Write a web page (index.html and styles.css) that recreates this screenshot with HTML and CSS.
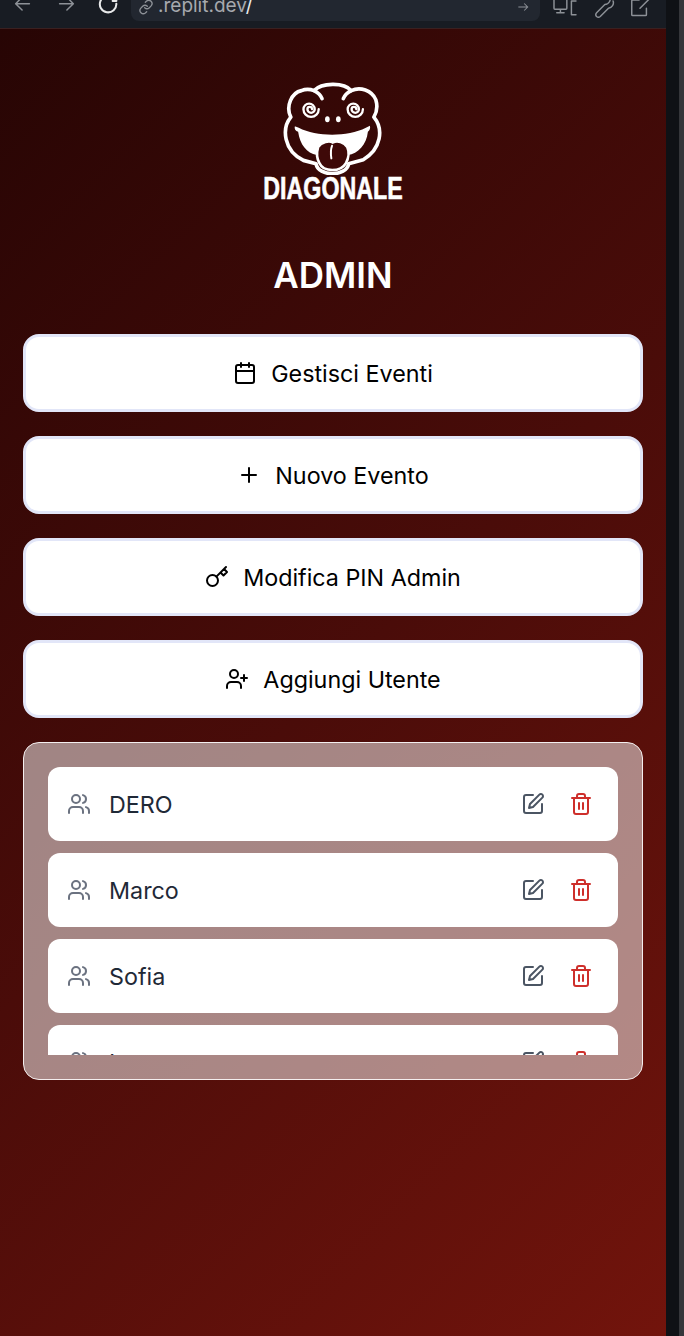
FILE: index.html
```html
<!DOCTYPE html>
<html lang="it">
<head>
<meta charset="utf-8">
<title>Diagonale Admin</title>
<link rel="stylesheet" href="styles.css">
</head>
<body>
<div class="window">
  <header class="topbar">
    <div class="nav">
      <svg class="tb-icon" viewBox="0 0 24 24"><path d="M19 4H5M11 -3 4 4l7 7"/></svg>
      <svg class="tb-icon" viewBox="0 0 24 24"><path d="M5 4h14M13 -3l7 7-7 7"/></svg>
      <svg class="tb-icon reload" viewBox="0 0 24 24"><path d="M20 4a9 9 0 1 1-4-7M20 -3v4h-4"/></svg>
    </div>
    <div class="address">
      <svg class="link-icon" viewBox="0 0 24 24"><path d="M10 13a5 5 0 0 0 7 0l3-3a5 5 0 0 0-7-7l-2 2M14 11a5 5 0 0 0-7 0l-3 3a5 5 0 0 0 7 7l2-2"/></svg>
      <span class="url">.replit.dev<span class="url-path">/</span></span>
      <svg class="go-icon" viewBox="0 0 24 24"><path d="M4 12h16M14 6l6 6-6 6"/></svg>
    </div>
    <div class="tools">
      <svg class="tb-icon tool-wide" viewBox="0 0 26 24"><path d="M1 -2v11a1 1 0 0 0 1 1h12a1 1 0 0 0 1-1V-2M8 10v4M4 14h8M25 1h-5v15h5"/></svg>
      <svg class="tb-icon" viewBox="0 0 24 24"><path d="M19 -4a6 6 0 0 1-5 9L5 14a3 3 0 0 0 0 4 3 3 0 0 0 4 0l9-9a6 6 0 0 0 5-8"/></svg>
      <svg class="tb-icon" viewBox="0 0 24 24"><path d="M11 0H4a1 1 0 0 0-1 1v15a1 1 0 0 0 1 1h14a1 1 0 0 0 1-1V9M12 9 22 -1"/></svg>
    </div>
  </header>

  <main class="page">
    <div class="logo">
      <svg class="logo-mark" viewBox="0 0 510 310">
        <g class="lm-line">
          <path d="M122 136C106 104 124 62 154 56 168 50 182 52 192 56 214 32 282 30 304 56 330 44 366 54 378 84 384 104 380 122 372 136 402 172 394 232 340 264L296 276C290 316 204 316 198 276L160 266C100 236 94 170 122 136Z"/>
          <path d="M192 56C204 62 212 70 216 80M304 56C292 62 284 70 280 80"/>
          <path class="lm-thin" d="M186 112a7 7 0 0 0-14 0a11 11 0 0 0 22 0a17 17 0 0 0-34 0a23 23 0 0 0 46 0"/>
          <path class="lm-thin" d="M319 112a7 7 0 0 0-14 0a11 11 0 0 0 22 0a17 17 0 0 0-34 0a23 23 0 0 0 46 0"/>
        </g>
        <ellipse class="lm-fill" cx="232" cy="142" rx="7" ry="9"/>
        <ellipse class="lm-fill" cx="265" cy="142" rx="7" ry="9"/>
        <path class="lm-fill" d="M136 164l10 4C200 196 292 196 348 168l12-6c2 6 0 14-6 18-4 40-30 66-60 70h-94c-30-6-50-30-56-70-8-2-12-10-10-16Z"/>
        <path class="lm-tongue" d="M204 226c10-16 34-20 44-14 14-6 34-2 44 14 6 14 4 34-4 48-16 28-68 28-80 0-8-14-8-34-4-48Z"/>
        <path class="lm-seam" d="M246 222c-4 10-4 24-2 38"/>
      </svg>
      <div class="logo-name">DIAGONALE</div>
    </div>

    <h1 class="title">ADMIN</h1>

    <div class="actions">
      <button class="action" type="button">
        <svg class="icon" viewBox="0 0 24 24"><path d="M8 2v4M16 2v4"/><rect x="3" y="4" width="18" height="18" rx="2"/><path d="M3 10h18"/></svg>
        <span class="action-label">Gestisci Eventi</span>
      </button>
      <button class="action" type="button">
        <svg class="icon" viewBox="0 0 24 24"><path d="M5 12h14M12 5v14"/></svg>
        <span class="action-label">Nuovo Evento</span>
      </button>
      <button class="action" type="button">
        <svg class="icon" viewBox="0 0 24 24"><circle cx="7.5" cy="15.5" r="5.5"/><path d="m21 2-9.6 9.6M15.5 7.5l3 3L22 7l-3-3"/></svg>
        <span class="action-label">Modifica PIN Admin</span>
      </button>
      <button class="action" type="button">
        <svg class="icon" viewBox="0 0 24 24"><path d="M16 21v-2a4 4 0 0 0-4-4H6a4 4 0 0 0-4 4v2"/><circle cx="9" cy="7" r="4"/><path d="M19 8v6M22 11h-6"/></svg>
        <span class="action-label">Aggiungi Utente</span>
      </button>
    </div>

    <section class="panel">
      <div class="user-list">
        <div class="user">
          <svg class="icon user-icon" viewBox="0 0 24 24"><path d="M16 21v-2a4 4 0 0 0-4-4H6a4 4 0 0 0-4 4v2"/><circle cx="9" cy="7" r="4"/><path d="M22 21v-2a4 4 0 0 0-3-3.87M16 3.13a4 4 0 0 1 0 7.75"/></svg>
          <span class="user-name">DERO</span>
          <svg class="icon edit-icon" viewBox="0 0 24 24"><path d="M12 3H5a2 2 0 0 0-2 2v14a2 2 0 0 0 2 2h14a2 2 0 0 0 2-2v-7"/><path d="M18.375 2.625a2.121 2.121 0 1 1 3 3L12 15l-4 1 1-4Z"/></svg>
          <svg class="icon trash-icon" viewBox="0 0 24 24"><path d="M3 6h18M19 6v14c0 1-1 2-2 2H7c-1 0-2-1-2-2V6M8 6V4c0-1 1-2 2-2h4c1 0 2 1 2 2v2M10 11v6M14 11v6"/></svg>
        </div>
        <div class="user">
          <svg class="icon user-icon" viewBox="0 0 24 24"><path d="M16 21v-2a4 4 0 0 0-4-4H6a4 4 0 0 0-4 4v2"/><circle cx="9" cy="7" r="4"/><path d="M22 21v-2a4 4 0 0 0-3-3.87M16 3.13a4 4 0 0 1 0 7.75"/></svg>
          <span class="user-name">Marco</span>
          <svg class="icon edit-icon" viewBox="0 0 24 24"><path d="M12 3H5a2 2 0 0 0-2 2v14a2 2 0 0 0 2 2h14a2 2 0 0 0 2-2v-7"/><path d="M18.375 2.625a2.121 2.121 0 1 1 3 3L12 15l-4 1 1-4Z"/></svg>
          <svg class="icon trash-icon" viewBox="0 0 24 24"><path d="M3 6h18M19 6v14c0 1-1 2-2 2H7c-1 0-2-1-2-2V6M8 6V4c0-1 1-2 2-2h4c1 0 2 1 2 2v2M10 11v6M14 11v6"/></svg>
        </div>
        <div class="user">
          <svg class="icon user-icon" viewBox="0 0 24 24"><path d="M16 21v-2a4 4 0 0 0-4-4H6a4 4 0 0 0-4 4v2"/><circle cx="9" cy="7" r="4"/><path d="M22 21v-2a4 4 0 0 0-3-3.87M16 3.13a4 4 0 0 1 0 7.75"/></svg>
          <span class="user-name">Sofia</span>
          <svg class="icon edit-icon" viewBox="0 0 24 24"><path d="M12 3H5a2 2 0 0 0-2 2v14a2 2 0 0 0 2 2h14a2 2 0 0 0 2-2v-7"/><path d="M18.375 2.625a2.121 2.121 0 1 1 3 3L12 15l-4 1 1-4Z"/></svg>
          <svg class="icon trash-icon" viewBox="0 0 24 24"><path d="M3 6h18M19 6v14c0 1-1 2-2 2H7c-1 0-2-1-2-2V6M8 6V4c0-1 1-2 2-2h4c1 0 2 1 2 2v2M10 11v6M14 11v6"/></svg>
        </div>
        <div class="user">
          <svg class="icon user-icon" viewBox="0 0 24 24"><path d="M16 21v-2a4 4 0 0 0-4-4H6a4 4 0 0 0-4 4v2"/><circle cx="9" cy="7" r="4"/><path d="M22 21v-2a4 4 0 0 0-3-3.87M16 3.13a4 4 0 0 1 0 7.75"/></svg>
          <span class="user-name">Luca</span>
          <svg class="icon edit-icon" viewBox="0 0 24 24"><path d="M12 3H5a2 2 0 0 0-2 2v14a2 2 0 0 0 2 2h14a2 2 0 0 0 2-2v-7"/><path d="M18.375 2.625a2.121 2.121 0 1 1 3 3L12 15l-4 1 1-4Z"/></svg>
          <svg class="icon trash-icon" viewBox="0 0 24 24"><path d="M3 6h18M19 6v14c0 1-1 2-2 2H7c-1 0-2-1-2-2V6M8 6V4c0-1 1-2 2-2h4c1 0 2 1 2 2v2M10 11v6M14 11v6"/></svg>
        </div>
      </div>
    </section>
  </main>
</div>
<div class="edge"></div>
</body>
</html>
```
FILE: styles.css
```css
* { box-sizing: border-box; }

html, body { height: 100%; }

body {
  margin: 0;
  display: flex;
  height: 1336px;
  overflow: hidden;
  background: #0f1115;
  font-family: Inter, "Liberation Sans", sans-serif;
}

.window {
  width: 666px;
  height: 1336px;
  display: flex;
  flex-direction: column;
  flex: none;
}

.edge {
  width: 18px;
  height: 1336px;
  flex: none;
  background: #0f1115;
  border-right: 5px solid #35363a;
}

/* Browser toolbar */
.topbar {
  height: 29px;
  flex: none;
  display: flex;
  align-items: flex-start;
  background: #181c23;
  overflow: hidden;
  border-bottom: 1px solid #3a2020;
}

.nav {
  width: 131px;
  flex: none;
  display: flex;
  padding-left: 12px;
  gap: 21px;
}

.tb-icon {
  width: 22px;
  height: 22px;
  flex: none;
  overflow: visible;
  fill: none;
  stroke: #8d9197;
  stroke-width: 1.6;
  stroke-linecap: round;
  stroke-linejoin: round;
}

.reload { stroke: #e8e9ea; stroke-width: 2.2; }

.address {
  width: 409px;
  height: 21px;
  flex: none;
  display: flex;
  align-items: flex-end;
  padding: 0 10px 6px 7px;
  background: #222730;
  border-radius: 0 0 8px 8px;
}

.link-icon {
  width: 16px;
  height: 16px;
  flex: none;
  fill: none;
  stroke: #8d9197;
  stroke-width: 2;
  stroke-linecap: round;
}

.url {
  margin-left: 4px;
  font-size: 19px;
  line-height: 18px;
  color: #a6a9ae;
}

.url-path { color: #eceded; }

.go-icon {
  width: 14px;
  height: 14px;
  margin: 0 0 1px auto;
  flex: none;
  fill: none;
  stroke: #8d9197;
  stroke-width: 1.8;
}

.tools {
  display: flex;
  gap: 15px;
  padding-left: 13px;
}

.tool-wide { width: 24px; }

/* Page */
.page {
  flex: 1;
  padding: 43px 23px 0;
  background: linear-gradient(135deg, #270504 0%, #4a0c09 50%, #72140c 100%);
}

.logo {
  display: flex;
  flex-direction: column;
  align-items: center;
  color: #fff;
  margin-left: 3px;
}

.logo-mark {
  width: 170px;
  height: 103px;
  display: block;
}

.lm-line {
  fill: none;
  stroke: #fff;
  stroke-width: 11;
  stroke-linecap: round;
  stroke-linejoin: round;
}

.lm-line .lm-thin { stroke-width: 7; }
.lm-fill { fill: #fff; }

.lm-tongue {
  fill: #3e0908;
  stroke: #fff;
  stroke-width: 8;
}

.lm-seam {
  fill: none;
  stroke: #fff;
  stroke-width: 6;
  stroke-linecap: round;
}

.logo-name {
  font-family: "Liberation Sans", sans-serif;
  font-weight: 700;
  font-size: 31px;
  line-height: 28px;
  white-space: nowrap;
  transform: scaleX(0.75);
  -webkit-text-stroke: 0.6px #fff;
  margin-left: -4px;
}

.title {
  margin: 52px 0 39px;
  text-align: center;
  font-size: 35px;
  line-height: 40px;
  font-weight: 600;
  color: #fff;
}

.actions {
  display: flex;
  flex-direction: column;
  gap: 24px;
}

.action {
  height: 78px;
  display: flex;
  align-items: center;
  justify-content: center;
  gap: 14px;
  background: #fff;
  border: 3px solid #e2e6f8;
  border-radius: 16px;
  color: #000;
  font: 420 23.3px/32px Inter, "Liberation Sans", sans-serif;
}

.action-label { padding-top: 2px; }

.icon {
  width: 24px;
  height: 24px;
  flex: none;
  fill: none;
  stroke: currentColor;
  stroke-width: 2;
  stroke-linecap: round;
  stroke-linejoin: round;
}

/* User panel */
.panel {
  height: 338px;
  margin-top: 24px;
  padding: 24px;
  background: rgba(255, 255, 255, 0.5);
  border: 1px solid #f4eeee;
  border-radius: 16px;
}

.user-list {
  height: 288px;
  display: flex;
  flex-direction: column;
  gap: 12px;
  overflow: hidden;
}

.user {
  height: 74px;
  flex: none;
  display: flex;
  align-items: center;
  padding: 0 25px 0 19px;
  background: #fff;
  border-radius: 12px;
}

.user-icon { color: #6b7280; }

.user-name {
  margin-left: 18px;
  padding-top: 2px;
  flex: 1;
  font-size: 23.3px;
  line-height: 32px;
  font-weight: 420;
  color: #1f2937;
}

.edit-icon { color: #4b5563; }
.trash-icon { color: #ce2f2b; margin-left: 24px; }
```
